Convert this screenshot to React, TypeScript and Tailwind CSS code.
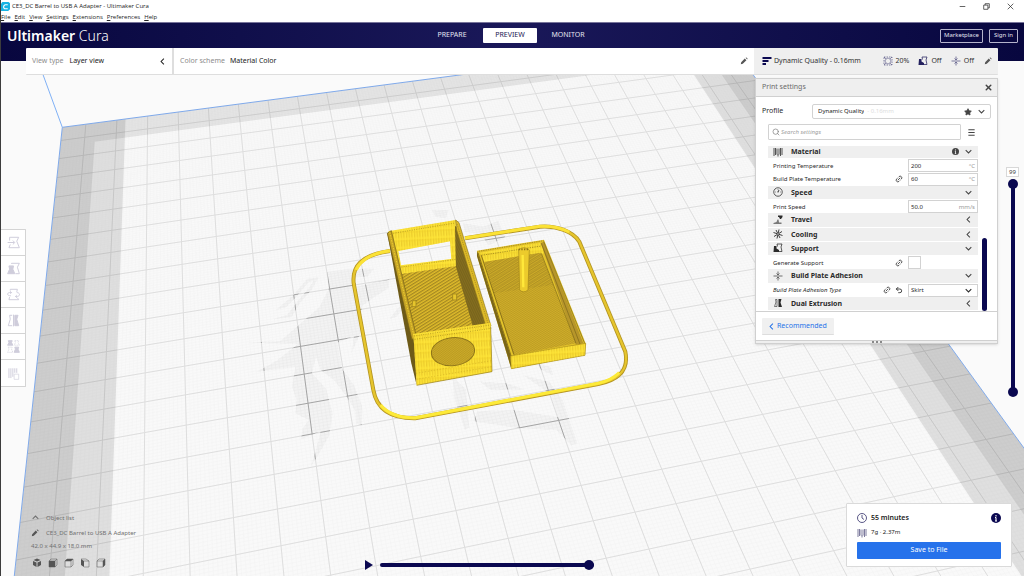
import type { ReactNode } from "react";
import { Link2, Search, Star, Undo2, X } from "lucide-react";

/* ---------- build plate projection ---------- */

// plate coordinates (1 unit = 1 cm, origin in the back left corner) to scene coordinates
function project(u: number, v: number) {
  const w = 1 + 0.0047047 * u - 0.019745 * v;
  return [
    (31.739 * u - 3.0801 * v + 62.3) / w,
    (-3.5409 * u + 14.776 * v + 127.3) / w,
  ];
}

function line(points: number[][]) {
  return "M" + points.map(([u, v]) => project(u, v).map((n) => n.toFixed(2)).join(" ")).join("L");
}

const plate = (points: number[][]) => line(points) + "Z";

const SIZE = 23.5;

function gridPath(start: number, step: number) {
  let d = "";
  for (let i = start; i < SIZE; i += step) {
    d += line([[i, 0], [i, SIZE]]) + line([[0, i], [SIZE, i]]);
  }
  return d;
}

const MAJOR = gridPath(0.75, 1);
const MINOR = gridPath(0.05, 0.1);
const PLATE = plate([[0, 0], [SIZE, 0], [SIZE, SIZE], [0, SIZE]]);
const CLIP_SIDE = 2.03;
const CLIP_EDGE = 1.08;

const LOGO = [
  "M292 216 L360 207 L432 206 L412 230 L374 230 L370 262 L478 238 L476 264 L432 292 L396 318 L390 402 L365 458 L372 408 L322 428 L336 506 L372 556 L396 618 L396 675 L380 672 L376 632 L350 590 L312 540 L272 510 L258 470 L246 520 L288 566 L308 640 L298 706 L262 770 L243 798 L262 735 L272 694 L213 718 L218 686 L236 660 L196 640 L200 600 L186 560 L196 500 L80 516 L140 482 L204 432 L50 428 L150 424 L206 376 L268 322 L296 268 Z",
  "M138 330 L190 286 L232 236 L266 232 L246 268 L212 306 L184 352 L130 358 L172 344 L206 300 L240 260 L250 242 L236 246 L198 292 L168 322 Z",
  "M606 30 L655 30 L648 54 L616 50 Z",
  "M700 70 L760 80 L805 62 L826 112 L776 136 L752 102 L704 96 Z",
  "M668 530 L708 568 L718 682 L704 690 L672 590 Z",
  "M750 545 L830 550 L882 568 L782 570 Z",
  "M880 526 L958 546 L998 600 L1042 730 L1024 736 L980 690 L862 684 L730 664 L742 634 L852 630 L986 652 L962 582 Z",
  "M918 490 L962 500 L970 526 L934 510 Z",
  "M540 300 L500 350 L478 358 L504 324 Z",
].join("");

function Models() {
  return (
    <g transform="translate(340 200) scale(.3333)">
      {/* skirt */}
      <path
        d="M150 153 C62 165 36 200 41 250 L100 570 C110 628 152 656 226 655 L775 552 C845 538 866 505 856 455 L718 125 C700 95 650 76 600 80 L375 115"
        fill="none"
        stroke="#b39422"
        strokeWidth="12"
      />
      <path
        d="M150 153 C62 165 36 200 41 250 L100 570 C110 628 152 656 226 655 L775 552 C845 538 866 505 856 455 L718 125 C700 95 650 76 600 80 L375 115"
        fill="none"
        stroke="#e6c52d"
        strokeWidth="7"
      />
      <path d="M122 615 C146 644 180 654 226 653 L775 550 C800 545 820 535 838 518" fill="none" stroke="#fdea38" strokeWidth="9" />
      <path d="M150 152 C90 160 62 180 48 210 M375 114 L600 79 C640 76 665 84 688 96" fill="none" stroke="#fbe236" strokeWidth="9" />

      {/* box */}
      <path d="M142 100 L152 92 L224 400 L230 556 L214 490 Z" fill="#6d5a18" />
      <path
        fillRule="evenodd"
        d="M145 94 L347 60 L352 200 L183 225 Z M175 153 L183 196 L334 177 L330 124 Z"
        fill="#f9dd32"
      />
      <path
        fillRule="evenodd"
        d="M145 94 L347 60 L352 200 L183 225 Z M175 153 L183 196 L334 177 L330 124 Z"
        fill="url(#walls)"
      />
      <path d="M183 222 L350 198 L404 390 L222 420 Z" fill="#e0bc2b" />
      <path d="M183 222 L350 198 L404 390 L222 420 Z" fill="url(#skin)" />
      <path d="M345 78 L358 88 L444 385 L402 390 L348 200 Z" fill="#86701f" />
      <path d="M345 78 L358 88 L444 385 L402 390 L348 200 Z" fill="url(#dark)" />
      <path d="M347 60 L357 68 L453 378 L438 380 L350 90 Z" fill="#ddba28" stroke="#8d751b" strokeWidth="2" />
      <path d="M351 72 L446 376" stroke="#9a8020" strokeWidth="2" strokeDasharray="4 3" />
      <path d="M142 100 L154 92 L228 404 L216 420 Z" fill="#c5a325" stroke="#715d16" strokeWidth="2" />
      <path d="M149 97 L222 408" stroke="#ecce30" strokeWidth="3" strokeDasharray="5 3" />
      <path d="M220 402 L452 368 L456 515 L230 556 Z" fill="#f9dc31" />
      <path d="M220 402 L452 368 L456 515 L230 556 Z" fill="url(#walls)" />
      <path d="M222 408 L452 375 M224 418 L454 385 M153 101 L345 69" stroke="#a08518" strokeWidth="2" strokeDasharray="3 4" />
      <path d="M184 201 L348 178" stroke="#a08518" strokeWidth="2" strokeDasharray="3 4" />
      <path d="M228 520 L455 482 M229 538 L455 500" stroke="#d2b024" strokeWidth="2" strokeDasharray="4 5" />
      <path d="M230 556 L456 515 L452 380" fill="none" stroke="#917717" strokeWidth="2" />
      <g transform="rotate(-6 339 455)">
        <ellipse cx="339" cy="455" rx="65" ry="42" fill="#dab629" stroke="#8d7419" strokeWidth="3" />
        <ellipse cx="339" cy="455" rx="64" ry="42" fill="url(#dots)" />
      </g>
      <path d="M218 302 h10 v18 h-12 z M338 282 h12 v18 h-12 z" fill="#e6c52c" stroke="#93791a" strokeWidth="2" />

      {/* lid */}
      <path d="M411 152 L612 119 L737 430 L735 466 L514 506 L411 168 Z" fill="#e3c32b" />
      <path d="M411 152 L512 466 L514 506 L411 168 Z" fill="#796519" />
      <path d="M420 158 L608 127 L612 160 L434 186 Z" fill="#f6da31" />
      <path d="M420 158 L608 127 L612 160 L434 186 Z" fill="url(#walls)" />
      <path d="M433 186 L602 158 L708 430 L520 466 Z" fill="#dfba2b" />
      <path d="M433 186 L602 158 L708 430 L520 466 Z" fill="url(#dots)" />
      <path d="M433 186 L602 158 L640 255 L462 280 Z" fill="url(#skin)" opacity=".45" />
      <path d="M602 128 L612 126 L730 430 L708 434 Z" fill="#b7962a" />
      <path d="M604 130 L720 432 M611 124 L734 430 M604 160 L708 430" stroke="#7a6519" strokeWidth="2" />
      <path d="M414 158 L514 470 M424 166 L522 464" stroke="#8b7219" strokeWidth="3" />
      <path d="M512 468 L737 430 L735 466 L514 506 Z" fill="#f9dc31" stroke="#a08418" strokeWidth="2" />
      <path d="M512 468 L737 430 L735 466 L514 506 Z" fill="url(#walls)" />
      <path d="M416 154 L611 122 M424 166 L604 138" stroke="#8b7219" strokeWidth="2" strokeDasharray="4 3" />
      <path d="M536 150 Q551 136 568 150 L564 270 Q551 281 539 270 Z" fill="#eccb2c" stroke="#a3861b" strokeWidth="2" />
      <path d="M548 165 L550 262" stroke="#ffe83a" strokeWidth="7" />
      <path d="M536 148 h32" stroke="#8b7219" strokeWidth="5" strokeDasharray="4 4" />
    </g>
  );
}

function Scene() {
  return (
    <svg
      className="h-0 w-full flex-1 bg-[#fafafa]"
      viewBox="1 61 1023 515"
      preserveAspectRatio="xMidYMid slice"
      aria-label="Layer view of the build plate"
    >
      <defs>
        <pattern id="walls" width="8" height="26" patternUnits="userSpaceOnUse" patternTransform="rotate(-3)">
          <path d="M2 0 V19" stroke="#d9b725" strokeWidth="1.5" />
          <path d="M6 6 V26" stroke="#ffeb40" strokeWidth="2" />
        </pattern>
        <pattern id="skin" width="8" height="8" patternUnits="userSpaceOnUse" patternTransform="rotate(-32)">
          <path d="M0 2 H8" stroke="#957b1f" strokeWidth="3" />
        </pattern>
        <pattern id="dots" width="5" height="5" patternUnits="userSpaceOnUse" patternTransform="rotate(-32)">
          <path d="M0 2 H5" stroke="#a0841f" strokeWidth="2" />
        </pattern>
        <pattern id="dark" width="6" height="6" patternUnits="userSpaceOnUse" patternTransform="rotate(65)">
          <path d="M0 2 H6" stroke="#6c5919" strokeWidth="2" />
        </pattern>
        <clipPath id="logo">
          <path d={LOGO} transform="translate(230 200) scale(.3333)" />
        </clipPath>
        <clipPath id="plate">
          <path d={PLATE} />
        </clipPath>
      </defs>

      <path d={PLATE} fill="#f9f9f9" />
      <g clipPath="url(#plate)" fill="none">
        <path d={MINOR} stroke="#f3f3f3" strokeWidth=".5" />
        <path d={MAJOR} stroke="#dedede" strokeWidth="1" />
        <path
          d={plate([[0, 0], [CLIP_SIDE, 0], [CLIP_SIDE, SIZE], [0, SIZE]])}
          fill="#000"
          fillOpacity=".1"
        />
        <path
          d={plate([[SIZE, 0], [SIZE - CLIP_SIDE, 0], [SIZE - CLIP_SIDE, SIZE], [SIZE, SIZE]])}
          fill="#000"
          fillOpacity=".1"
        />
        <path
          d={plate([
            [0, 0],
            [SIZE, 0],
            [SIZE, SIZE],
            [SIZE - CLIP_EDGE, SIZE],
            [SIZE - CLIP_EDGE, CLIP_EDGE],
            [CLIP_EDGE, CLIP_EDGE],
            [CLIP_EDGE, SIZE],
            [0, SIZE],
          ])}
          fill="#000"
          fillOpacity=".08"
        />
      </g>
      <g clipPath="url(#logo)" fill="none">
        <path d={PLATE} fill="#f3f3f3" />
        <path d={MINOR} stroke="#e8e8e8" strokeWidth=".5" />
        <path d={MAJOR} stroke="#a4a4a4" strokeWidth="1" />
      </g>
      <path d={PLATE} fill="none" stroke="#7fa9ea" strokeWidth="1" />
      <path d="M62.3 127.3 L38 61" stroke="#7fb0f5" strokeWidth="1" />
      <Models />
    </svg>
  );
}

/* ---------- icons ---------- */

function Icon({ size = "size-[10px]", children }: { size?: string; children: ReactNode }) {
  return (
    <svg viewBox="0 0 20 20" className={`${size} shrink-0`} fill="none" stroke="currentColor" strokeWidth="1.5" aria-hidden="true">
      {children}
    </svg>
  );
}

function Chevron({ dir = "down" }: { dir?: "down" | "left" | "up" }) {
  const d = {
    down: "M2 6 L10 14 L18 6",
    left: "M14 2 L6 10 L14 18",
    up: "M2 14 L10 6 L18 14",
  }[dir];
  return (
    <svg viewBox="0 0 20 20" className="size-[7px] shrink-0" fill="none" stroke="currentColor" strokeWidth="3" aria-hidden="true">
      <path d={d} />
    </svg>
  );
}

const Pencil = () => (
  <Icon size="size-[8px]">
    <path d="M2 18 L3 13 L12 4 L16 8 L7 17 Z M14 2 L16 1 L19 4 L18 6 Z" fill="currentColor" stroke="none" />
  </Icon>
);

const spool = (
  <path d="M2 2 V18 M5 2 V16 M8 3 V15 M12 3 V15 M15 2 V18 M18 2 V16 M10 14 V19" strokeWidth="1.6" />
);
const support = (
  <>
    <path d="M8 2 H18 L16 8 L18 17 H11 M8 2 L9 7" />
    <path d="M2 6 H7 V11 L12 14 V18 H1 Z" fill="currentColor" stroke="none" />
  </>
);
const adhesion = <path d="M1 10 H19 M10 1 V7 M7 5 L10 8 L13 5 M10 19 V13 M7 15 L10 12 L13 15" strokeWidth="1.3" />;
const dial = (
  <>
    <circle cx="10" cy="10" r="8.5" />
    <path d="M10 10 L12 6 M9 10 h2 M4 10 h1 M15 10 h1 M10 4 v1" strokeWidth="1.8" />
  </>
);
const travel = (
  <>
    <path d="M10 1 H19 V4 L16 8 H14 L12 4 H10 Z" fill="currentColor" stroke="none" />
    <path d="M1 18 H17 V15 H12 L11 9 H9 L7 14 L1 16 Z" fill="currentColor" fillOpacity=".6" stroke="none" />
  </>
);
const fan = (
  <>
    <path
      d="M10 10 L12 1 M10 10 L18 5 M10 10 L19 13 M10 10 L14 18 M10 10 L8 19 M10 10 L2 15 M10 10 L1 7 M10 10 L6 2"
      strokeWidth="1.8"
    />
    <circle cx="10" cy="10" r="2" fill="#efefef" strokeWidth="1" />
  </>
);
const dual = (
  <>
    <path d="M8 3 H5 L6 8 L3 17 H8 Z" strokeWidth="1.2" />
    <path d="M11 2 H17 L15 9 L18 18 H11 Z" fill="currentColor" stroke="none" />
  </>
);
const infill = (
  <>
    <path d="M2 2 H18 V18 H2 Z" strokeDasharray="3 2" strokeWidth="1.2" />
    <path d="M10 4 L14 6 L16 10 L14 14 L10 16 L6 14 L4 10 L6 6 Z M2 2 L6 6 M18 2 L14 6 M2 18 L6 14 M18 18 L14 14" strokeWidth="1" />
  </>
);
const info = (
  <>
    <circle cx="10" cy="10" r="10" fill="currentColor" stroke="none" />
    <path d="M10 4 V7 M10 9 V16 M8 9 H10 M8 16 H12" stroke="#fff" strokeWidth="2.2" />
  </>
);

/* ---------- header ---------- */

const MENUS = ["File", "Edit", "View", "Settings", "Extensions", "Preferences", "Help"];

function WindowHeader() {
  return (
    <header className="h-[23px] border-b border-[#77749a] bg-white font-['Open_Sans',sans-serif] text-[6px] text-[#222]">
      <div className="flex h-[12px] items-center">
        <svg viewBox="0 0 20 20" className="size-[9px] shrink-0" aria-hidden="true">
          <path d="M3 0 H17 L20 3 V16 L16 20 H0 V4 Z" fill="#17b2e3" />
          <path d="M15 6 H9 L6 9 V13 L8 15 H15" fill="none" stroke="#fff" strokeWidth="2.5" />
        </svg>
        <h1 className="ml-[2px]">CE3_DC Barrel to USB A Adapter - Ultimaker Cura</h1>
        <div className="ml-auto flex gap-[17px] pr-[10px]">
          <button type="button" aria-label="Minimize">
            <Icon size="size-[7px]"><path d="M2 10 H18" strokeWidth="2" /></Icon>
          </button>
          <button type="button" aria-label="Restore">
            <Icon size="size-[7px]"><path d="M2 6 H14 V18 H2 Z M6 6 V2 H18 V14 H14" strokeWidth="2" /></Icon>
          </button>
          <button type="button" aria-label="Close">
            <Icon size="size-[7px]"><path d="M2 2 L18 18 M18 2 L2 18" strokeWidth="2" /></Icon>
          </button>
        </div>
      </div>
      <nav className="flex h-[10px] items-center gap-[4px]">
        {MENUS.map((m) => (
          <button key={m} type="button">
            <span className="underline">{m[0]}</span>
            {m.slice(1)}
          </button>
        ))}
      </nav>
    </header>
  );
}

function StageBar() {
  const stages = ["PREPARE", "PREVIEW", "MONITOR"];
  return (
    <div className="grid h-[25px] grid-cols-[1fr_auto_1fr] items-center px-[6px] text-white">
      <div className="text-[14px] leading-none font-semibold">
        Ultimaker <span className="font-light">Cura</span>
      </div>
      <div className="mr-[5px] flex gap-[4px]">
        {stages.map((s) => (
          <button
            key={s}
            type="button"
            className={`h-[15px] w-[54px] rounded-[1px] text-[7px] ${
              s === "PREVIEW" ? "bg-white text-[#191650]" : "text-[#e4e4f0]"
            }`}
          >
            {s}
          </button>
        ))}
      </div>
      <div className="flex justify-end gap-[6px] text-[6px] text-[#e4e4f0]">
        <button type="button" className="h-[14px] rounded-[1px] border border-[#b5b4cc] px-[3px]">Marketplace</button>
        <button type="button" className="h-[14px] rounded-[1px] border border-[#b5b4cc] px-[4px]">Sign in</button>
      </div>
    </div>
  );
}

function ViewBar() {
  return (
    <div className="flex h-[27px] pr-[26px] pl-[25px] text-[7px] text-[#222]">
      <button type="button" className="flex w-[146px] items-center rounded-l-[1px] border-b border-[#dedede] bg-white px-[6px]">
        <span className="mr-[6px] text-[#8c8c8c]">View type</span>
        Layer view
        <span className="ml-auto"><Chevron dir="left" /></span>
      </button>
      <button type="button" className="flex flex-1 items-center border-b border-l-2 border-[#dedede] bg-white px-[6px]">
        <span className="mr-[5px] text-[#8c8c8c]">Color scheme</span>
        Material Color
        <span className="ml-auto text-[#555]"><Pencil /></span>
      </button>
      <button type="button" className="flex w-[244px] items-center rounded-r-[1px] border-b border-[#dedede] bg-[#efefef] pr-[6px] pl-[8px] text-[#333]">
        <span className="text-[#0a0850]">
          <Icon>
            <path d="M1 4 H19 M1 10 H13 M1 16 H8" strokeWidth="4" />
          </Icon>
        </span>
        <span className="ml-[2px]">Dynamic Quality - 0.16mm</span>
        <span className="ml-auto flex items-center gap-[3px]"><span className="text-[#3b3970]"><Icon>{infill}</Icon></span>20%</span>
        <span className="ml-[9px] flex items-center gap-[3px]"><span className="text-[#24215f]"><Icon>{support}</Icon></span>Off</span>
        <span className="ml-[9px] flex items-center gap-[3px]"><span className="text-[#3b3970]"><Icon>{adhesion}</Icon></span>Off</span>
        <span className="ml-[10px] text-[#555]"><Pencil /></span>
      </button>
    </div>
  );
}

/* ---------- print settings ---------- */

function Category({
  icon,
  title,
  open = false,
  badge,
}: {
  icon: ReactNode;
  title: string;
  open?: boolean;
  badge?: ReactNode;
}) {
  return (
    <button
      type="button"
      aria-expanded={open}
      className="mb-px flex min-h-0 flex-1 items-center bg-[#efefef] pr-[6px] pl-[5px] text-[7px] leading-none font-bold text-[#2a2a2a]"
    >
      <Icon>{icon}</Icon>
      <span className="ml-[8px]">{title}</span>
      <span className="ml-auto flex items-center gap-[6px] text-[#444]">
        {badge}
        <Chevron dir={open ? "down" : "left"} />
      </span>
    </button>
  );
}

function Setting({
  id,
  label,
  marks,
  changed = false,
  children,
}: {
  id: string;
  label: string;
  marks?: ReactNode;
  changed?: boolean;
  children: ReactNode;
}) {
  return (
    <div className="flex min-h-0 flex-1 items-center pl-[5px] text-[6px] leading-none text-[#2a2a2a]">
      <label htmlFor={id} className={changed ? "italic" : ""}>{label}</label>
      <span className="mr-[5px] ml-auto flex gap-[4px] text-[#444]">{marks}</span>
      <div className="flex w-[70px]">{children}</div>
    </div>
  );
}

function NumberBox({ id, value, unit }: { id: string; value: string; unit: string }) {
  return (
    <div className="flex h-[13px] w-full items-center border border-[#d2d2d2] bg-white px-[2px]">
      <input id={id} type="text" defaultValue={value} className="w-full min-w-0 outline-none" />
      <span className="text-[#999]">{unit}</span>
    </div>
  );
}

const linkMark = <Link2 className="size-[8px] -rotate-45" strokeWidth={2.5} />;

function PrintSettings() {
  return (
    <section className="mt-[3px] w-[243px] border border-[#d0d0d0] bg-white text-[7px] text-[#2a2a2a] shadow-sm">
      <div className="flex h-[18px] items-center justify-between border-b border-[#d0d0d0] bg-[#efefef] pr-[4px] pl-[6px] text-[#6a6a6a]">
        <h2>Print settings</h2>
        <button type="button" aria-label="Close" className="text-[#444]">
          <X className="size-[9px]" strokeWidth={4} />
        </button>
      </div>

      <div className="flex items-center pt-[7px] pr-[6px] pl-[6px]">
        <label htmlFor="profile" className="w-[50px]">Profile</label>
        <div className="flex h-[15px] flex-1 items-center rounded-[2px] border border-[#d2d2d2] px-[5px] text-[6px] text-[#ddd]">
          <select id="profile" className="appearance-none text-[#222] [field-sizing:content]">
            <option>Dynamic Quality</option>
          </select>
          <span className="ml-[3px]">- 0.16mm</span>
          <span className="ml-auto flex items-center gap-[6px] text-[#444]">
            <Star className="size-[8px]" fill="currentColor" />
            <Chevron />
          </span>
        </div>
      </div>

      <div className="flex items-center pt-[5px] pr-[21px] pl-[12px]">
        <div className="flex h-[16px] flex-1 items-center rounded-[1px] border border-[#d2d2d2] px-[3px] text-[6px]">
          <Search className="size-[8px] shrink-0 text-[#777]" />
          <input
            type="text"
            aria-label="Search settings"
            placeholder="Search settings"
            className="ml-px w-full outline-none placeholder:text-[#a0a0a0] placeholder:italic"
          />
        </div>
        <button type="button" aria-label="Setting visibility" className="ml-[6px] text-[#444]">
          <Icon size="size-[9px]">
            <path d="M3 4 H17 M3 10 H17 M3 16 H17" strokeWidth="2.5" />
          </Icon>
        </button>
      </div>

      <div className="mt-[6px] flex pl-[12px]">
        <div className="flex h-[165px] w-[210px] flex-col justify-end overflow-hidden">
          <div className="flex h-[166px] shrink-0 flex-col">
            <Category icon={spool} title="Material" open badge={<Icon size="size-[7px]">{info}</Icon>} />
            <Setting id="temp" label="Printing Temperature">
              <NumberBox id="temp" value="200" unit="°C" />
            </Setting>
            <Setting id="bed" label="Build Plate Temperature" marks={linkMark}>
              <NumberBox id="bed" value="60" unit="°C" />
            </Setting>
            <Category icon={dial} title="Speed" open />
            <Setting id="speed" label="Print Speed">
              <NumberBox id="speed" value="50.0" unit="mm/s" />
            </Setting>
            <Category icon={travel} title="Travel" />
            <Category icon={fan} title="Cooling" />
            <Category icon={support} title="Support" open />
            <Setting id="support" label="Generate Support" marks={linkMark}>
              <input id="support" type="checkbox" className="size-[13px] appearance-none border border-[#d2d2d2] bg-white" />
            </Setting>
            <Category icon={adhesion} title="Build Plate Adhesion" open />
            <Setting
              id="adhesion"
              label="Build Plate Adhesion Type"
              changed
              marks={
                <>
                  {linkMark}
                  <Undo2 className="size-[8px]" strokeWidth={3} />
                </>
              }
            >
              <div className="flex h-[13px] w-full items-center border border-[#d2d2d2] bg-white pr-[5px] pl-[2px]">
                <select id="adhesion" className="flex-1 appearance-none">
                  <option>Skirt</option>
                </select>
                <Chevron />
              </div>
            </Setting>
            <Category icon={dual} title="Dual Extrusion" />
          </div>
        </div>
        <div className="ml-[4px] h-[73px] w-[5px] self-end rounded-full bg-[#0a0850]" />
      </div>

      <div className="border-t border-[#d0d0d0] px-[6px] pt-[6px] pb-[5px]">
        <button type="button" className="flex h-[17px] items-center gap-[2px] rounded-[1px] border-b border-[#ddd] bg-[#f0f0f0] px-[6px] text-[#2672e8]">
          <Chevron dir="left" />
          <span className="pr-px">Recommended</span>
        </button>
      </div>
      <div className="flex h-[3px] items-center justify-center gap-[2px] border-t border-[#d0d0d0] bg-[#efefef]">
        <i className="size-[2px] rounded-full bg-[#666]" />
        <i className="size-[2px] rounded-full bg-[#666]" />
        <i className="size-[2px] rounded-full bg-[#666]" />
      </div>
    </section>
  );
}

/* ---------- sliders ---------- */

function LayerSlider() {
  const range =
    "h-[218px] w-[10px] appearance-none bg-transparent [direction:rtl] [grid-area:1/1] [writing-mode:vertical-lr] [&::-webkit-slider-thumb]:size-[10px] [&::-webkit-slider-thumb]:appearance-none [&::-webkit-slider-thumb]:rounded-full [&::-webkit-slider-thumb]:bg-[#0a0850]";
  return (
    <div className="flex w-[26px] flex-col items-center pt-[92px] pl-[3px]">
      <output className="flex h-[10px] w-[13px] items-center justify-center border border-[#d8d8d8] bg-white text-[6px] text-[#444]">99</output>
      <div className="mt-[2px] grid justify-items-center">
        <div className="my-[5px] w-[4px] bg-[#0a0850] [grid-area:1/1]" />
        <input type="range" aria-label="Top layer" min={1} max={99} defaultValue={99} className={range} />
        <input type="range" aria-label="Bottom layer" min={1} max={99} defaultValue={1} className={range} />
      </div>
    </div>
  );
}

function PathSlider() {
  return (
    <div className="mb-[6px] flex items-center gap-[7px] self-end">
      <button type="button" aria-label="Play" className="text-[#0a0850]">
        <svg viewBox="0 0 8 10" className="h-[10px] w-[8px]" fill="currentColor" aria-hidden="true">
          <path d="M0 0 L8 5 L0 10 Z" />
        </svg>
      </button>
      <input
        type="range"
        aria-label="Path"
        defaultValue={100}
        className="h-[11px] w-[214px] appearance-none bg-transparent [&::-webkit-slider-runnable-track]:h-[4px] [&::-webkit-slider-runnable-track]:rounded-full [&::-webkit-slider-runnable-track]:bg-[#0a0850] [&::-webkit-slider-thumb]:-mt-[3px] [&::-webkit-slider-thumb]:size-[10px] [&::-webkit-slider-thumb]:appearance-none [&::-webkit-slider-thumb]:rounded-full [&::-webkit-slider-thumb]:bg-[#0a0850]"
      />
    </div>
  );
}

/* ---------- left side ---------- */

const TOOLS = [
  {
    name: "Move",
    art: <path d="M4 7 V2 H18 L15 8 L19 18 H3 L5 13 M1 10 H11 M9 7 L12 10 L9 13" />,
  },
  {
    name: "Scale",
    art: (
      <>
        <path d="M7 3 V2 H19 L16 8 L19 18 H13" />
        <path d="M3 6 H10 L9 11 L12 18 H1 L4 11 Z" fill="currentColor" />
      </>
    ),
  },
  {
    name: "Rotate",
    art: <path d="M5 4 V2 H16 L15 6 M4 14 L3 18 H18 L16 15 M6 12 C0 12 -1 8 4 7 L7 7 M5 5 L7 7 L5 9 M15 7 C20 7 21 12 16 13 L13 13 M15 11 L13 13 L15 15" />,
  },
  {
    name: "Mirror",
    art: (
      <>
        <path d="M8 2 H4 L5 8 L2 18 H8 M10 1 V19" />
        <path d="M12 2 H17 L15 8 L18 18 H12 Z" fill="currentColor" />
      </>
    ),
  },
  {
    name: "Per model settings",
    art: (
      <>
        <path d="M2 1 H8 L7 4 L9 8 H1 L3 4 Z M12 11 H18 L17 14 L19 19 H11 L13 14 Z" fill="currentColor" />
        <path d="M12 1 H18 L17 4 L19 8 H11 L13 4 Z M2 11 H8 L7 14 L9 19 H1 L3 14 Z" strokeDasharray="2 1" strokeWidth="1" />
      </>
    ),
  },
  {
    name: "Support blocker",
    art: (
      <>
        <path d="M3 2 V17 M6 2 V17 M9 2 V15 M12 2 V9 M15 2 V9" />
        <path d="M11 11 H18 V19 H11 Z" strokeWidth="1" />
      </>
    ),
  },
];

function Toolbar() {
  return (
    <div className="mt-[154px] w-[25px] self-start divide-y divide-[#d4d4d4] rounded-r-[1px] border border-l-0 border-[#d4d4d4] bg-white">
      {TOOLS.map((t) => (
        <button key={t.name} type="button" disabled aria-label={t.name} className="flex h-[26px] w-full items-center justify-center text-[#cfcddb]">
          <Icon size="size-[13px]">{t.art}</Icon>
        </button>
      ))}
    </div>
  );
}

const CUBES = [
  { name: "3D view", face: "M2 6 L9 9 V18 L2 14 Z M18 6 L11 9 V18 L18 14 Z M10 1 L17 4 L10 7 L3 4 Z" },
  { name: "Front view", face: "M2 6 H14 V18 H2 Z" },
  { name: "Top view", face: "M2 6 L6 2 H18 L14 6 Z" },
  { name: "Left view", face: "M2 2 L8 6 V18 L2 14 Z" },
  { name: "Right view", face: "M14 6 L18 2 V14 L14 18 Z" },
];

function ObjectInfo() {
  return (
    <div className="pb-[8px] text-[6px] leading-none text-[#707070]">
      <button type="button" className="flex items-center gap-[7px] pl-px text-[6px]">
        <Chevron dir="up" />
        Object list
      </button>
      <div className="mt-[8px] flex items-center gap-[7px]">
        <span className="text-[#555]"><Pencil /></span>
        <span>CE3_DC Barrel to USB A Adapter</span>
      </div>
      <p className="mt-[6px]">42.0 x 44.9 x 18.0 mm</p>
      <div className="mt-[9px] flex gap-[6px] pl-px text-[#555]">
        {CUBES.map((c, i) => (
          <button key={c.name} type="button" aria-label={c.name}>
            <Icon>
              {i === 3 && <path d="M2 2 H12 L18 6 V18 H8 M8 6 H18" strokeWidth="1" />}
              {i !== 0 && i !== 3 && <path d="M2 6 L6 2 H18 V14 L14 18 H2 Z M2 6 H14 V18 M14 6 L18 2" strokeWidth="1" />}
              <path d={c.face} fill="currentColor" stroke="none" />
            </Icon>
          </button>
        ))}
      </div>
    </div>
  );
}

/* ---------- output card ---------- */

function OutputCard() {
  return (
    <section className="mb-[9px] w-[166px] justify-self-end rounded-[1px] border border-[#dadada] bg-white px-[10px] pt-[8px] pb-[7px] text-[7px] text-[#222]">
      <div className="flex h-[12px] items-center">
        <span className="text-[#24215f]">
          <Icon>
            <circle cx="10" cy="10" r="9" />
            <path d="M10 4 V10 L14 13" />
          </Icon>
        </span>
        <span className="ml-[4px] font-semibold">55 minutes</span>
        <button type="button" aria-label="Print details" className="ml-auto text-[#0a0850]">
          <Icon>{info}</Icon>
        </button>
      </div>
      <div className="mt-[3px] flex h-[11px] items-center text-[6px]">
        <span className="text-[#5d5b86]"><Icon>{spool}</Icon></span>
        <span className="ml-[4px]">7g · 2.37m</span>
      </div>
      <button type="button" className="mt-[4px] h-[17px] w-full rounded-[1px] bg-[#2672eb] text-[7px] text-white">Save to File</button>
    </section>
  );
}

export default function App() {
  return (
    <div className="flex min-h-screen flex-col border-l border-[#3c3c3c] bg-[#fafafa] font-['Noto_Sans',sans-serif]">
      <WindowHeader />
      <main className="grid flex-1">
        <div className="flex flex-col [grid-area:1/1]">
          <div className="h-[38px] bg-linear-to-r from-[#08073f] via-[#1a1859] to-[#08073f]" />
          <Scene />
        </div>
        <div className="z-10 flex flex-col [grid-area:1/1]">
          <StageBar />
          <ViewBar />
          <div className="flex flex-1 justify-between">
            <Toolbar />
            <div className="flex items-start">
              <PrintSettings />
              <LayerSlider />
            </div>
          </div>
          <footer className="grid grid-cols-[4fr_229px_5fr] items-end pr-[12px] pl-[30px]">
            <ObjectInfo />
            <PathSlider />
            <OutputCard />
          </footer>
        </div>
      </main>
    </div>
  );
}
